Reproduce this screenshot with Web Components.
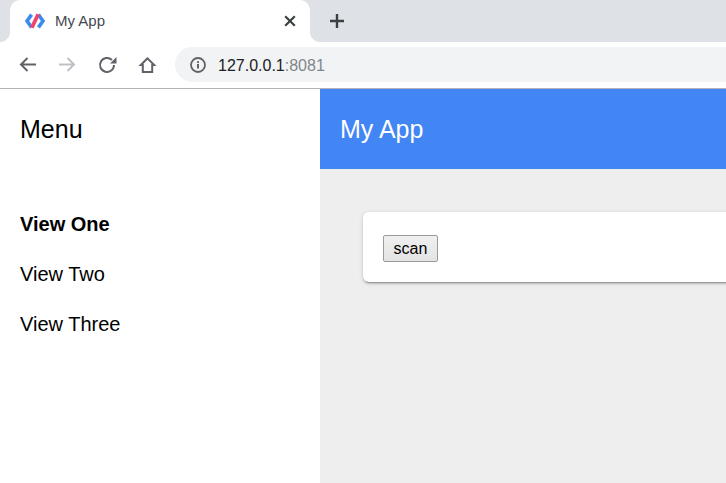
<!DOCTYPE html>
<html>
<head>
<meta charset="utf-8">
<title>My App</title>
<style>
  html, body { margin: 0; height: 100%; overflow: hidden; background: #fff; }
  body { font-family: "Liberation Sans", Arial, sans-serif; }
</style>
</head>
<body>
<browser-frame>
  <app-shell>
    <side-menu slot="menu" heading="Menu">
      <a class="selected">View One</a>
      <a>View Two</a>
      <a>View Three</a>
    </side-menu>
    <app-header slot="header">My App</app-header>
    <app-card><scan-button>scan</scan-button></app-card>
  </app-shell>
</browser-frame>

<script>
class BrowserFrame extends HTMLElement {
  constructor() {
    super();
    const shadow = this.attachShadow({ mode: 'open' });
    shadow.innerHTML = `
    <style>
      :host {
        display: flex;
        flex-direction: column;
        width: 726px;
        height: 483px;
        overflow: hidden;
        font-family: "Liberation Sans", Arial, sans-serif;
      }

      .strip {
        display: flex;
        flex: none;
        height: 42px;
        background: #dee1e6;
      }

      .gap {
        flex: none;
        width: 10px;
        background: #dee1e6;
      }

      .tab {
        position: relative;
        display: flex;
        flex: none;
        align-items: center;
        box-sizing: border-box;
        width: 300px;
        height: 42px;
        padding: 0 12px 0 15px;
        background: #fff;
        border-radius: 10px 10px 0 0;
      }

      .tab::before,
      .tab::after {
        content: '';
        position: absolute;
        bottom: 0;
        width: 10px;
        height: 10px;
        background: radial-gradient(circle at var(--cx) 0, #dee1e6 9.5px, #fff 10.5px);
      }

      .tab::before {
        --cx: 0;
        left: -10px;
      }

      .tab::after {
        --cx: 100%;
        right: -10px;
      }

      .title {
        flex: 1;
        margin: -2px 0 0 10px;
        color: #45494f;
        font-size: 15px;
      }

      .close {
        display: block;
        width: 16px;
        height: 16px;
      }

      .plus {
        display: block;
        margin: 13px 0 0 19px;
      }

      .toolbar {
        display: flex;
        flex: none;
        align-items: center;
        box-sizing: border-box;
        height: 47px;
        padding: 5px 0 6px 15px;
        background: #fff;
        border-bottom: 1px solid #b3b3b3;
      }

      .toolbar .nav {
        display: block;
        flex: none;
        width: 24px;
        height: 24px;
        margin: -1px 16px 0 0;
      }

      .omnibox {
        display: flex;
        flex: none;
        align-items: center;
        box-sizing: border-box;
        width: 620px;
        height: 35px;
        padding-left: 15px;
        background: #f1f3f4;
        border-radius: 18px;
      }

      .info {
        display: block;
        flex: none;
        margin-right: 12px;
      }

      .url {
        position: relative;
        top: 1px;
        color: #202124;
        font-size: 16px;
      }

      .port {
        color: #80868b;
      }

      .page {
        flex: 1;
        min-height: 0;
      }
    </style>

    <div class="strip">
      <div class="gap"></div>
      <div class="tab">
        <svg width="20" height="16" viewBox="0 0 20 16">
          <path d="M6.6 1.6 2 8l4.6 6.4" fill="none" stroke="#3b8af0" stroke-width="3.6"/>
          <path d="M13.4 1.6 18 8l-4.6 6.4" fill="none" stroke="#3b8af0" stroke-width="3.6"/>
          <path d="M13.2 1.2 6.8 14.8" fill="none" stroke="#f0426b" stroke-width="3.8"/>
        </svg>
        <span class="title">My App</span>
        <svg class="close" viewBox="0 0 16 16">
          <path d="M3.2 3.2l9.6 9.6M12.8 3.2l-9.6 9.6" stroke="#3c4043" stroke-width="2.2" fill="none"/>
        </svg>
      </div>
      <svg class="plus" width="16" height="16" viewBox="0 0 16 16">
        <path d="M8 1v14M1 8h14" stroke="#3c4043" stroke-width="2.4" fill="none"/>
      </svg>
    </div>

    <div class="toolbar">
      <svg class="nav" viewBox="0 0 24 24">
        <path d="M21 12.5H6M12.5 6l-6.5 6.5 6.5 6.5" stroke="#5f6368" stroke-width="2" fill="none"/>
      </svg>
      <svg class="nav" viewBox="0 0 24 24">
        <path d="M4 12.5h15M12.5 6l6.5 6.5-6.5 6.5" stroke="#bdc1c6" stroke-width="2" fill="none"/>
      </svg>
      <svg class="nav" viewBox="0 0 24 24">
        <path d="M16.9 8A7 7 0 1 0 19 13" stroke="#5f6368" stroke-width="2" fill="none"/>
        <path d="M21.5 5v6.5H15z" fill="#5f6368"/>
      </svg>
      <svg class="nav" viewBox="0 0 24 24">
        <path d="M12.5 6.3 5.8 13h2v7h9.4v-7h2z" stroke="#5f6368" stroke-width="2" fill="none"/>
      </svg>
      <div class="omnibox">
        <svg class="info" width="16" height="16" viewBox="0 0 16 16">
          <circle cx="8" cy="8" r="7" fill="none" stroke="#5f6368" stroke-width="1.8"/>
          <path d="M7 7h2v4.6H7zM7 4.2h2v1.8H7z" fill="#5f6368"/>
        </svg>
        <span class="url">127.0.0.1<span class="port">:8081</span></span>
      </div>
    </div>

    <div class="page"><slot></slot></div>
  `;
  }
}

class AppShell extends HTMLElement {
  constructor() {
    super();
    const shadow = this.attachShadow({ mode: 'open' });
    shadow.innerHTML = `
    <style>
      :host {
        display: flex;
        height: 100%;
      }

      .menu {
        flex: none;
        width: 320px;
        background: #fff;
      }

      .main {
        flex: none;
        width: 700px;
        background: #eee;
      }

      .content {
        padding: 43px;
      }
    </style>

    <div class="menu"><slot name="menu"></slot></div>
    <div class="main">
      <slot name="header"></slot>
      <div class="content"><slot></slot></div>
    </div>
  `;
  }
}

class SideMenu extends HTMLElement {
  constructor() {
    super();
    const shadow = this.attachShadow({ mode: 'open' });
    shadow.innerHTML = `
    <style>
      :host {
        display: block;
        color: #000;
      }

      .heading {
        box-sizing: border-box;
        height: 80px;
        padding-left: 20px;
        font-size: 25px;
        line-height: 80px;
      }

      nav {
        display: flex;
        flex-direction: column;
        padding-top: 30px;
      }

      ::slotted(a) {
        display: block;
        padding: 0 20px;
        font-size: 20px;
        line-height: 50px;
      }

      ::slotted(a.selected) {
        font-weight: bold;
      }
    </style>

    <div class="heading"></div>
    <nav><slot></slot></nav>
  `;
    shadow.querySelector('.heading').textContent = this.getAttribute('heading');
  }
}

class AppHeader extends HTMLElement {
  constructor() {
    super();
    const shadow = this.attachShadow({ mode: 'open' });
    shadow.innerHTML = `
    <style>
      :host {
        display: block;
        box-sizing: border-box;
        height: 80px;
        padding-left: 20px;
        background: #4285f4;
        color: #fff;
        font-size: 25px;
        line-height: 80px;
      }
    </style>

    <slot></slot>
  `;
  }
}

class AppCard extends HTMLElement {
  constructor() {
    super();
    const shadow = this.attachShadow({ mode: 'open' });
    shadow.innerHTML = `
    <style>
      :host {
        display: block;
        box-sizing: border-box;
        height: 70px;
        padding: 23px 20px 0;
        background: #fff;
        border-radius: 6px;
        box-shadow: 0 2px 2px rgba(0, 0, 0, 0.14), 0 1px 5px rgba(0, 0, 0, 0.12), 0 3px 1px -2px rgba(0, 0, 0, 0.2);
      }
    </style>

    <slot></slot>
  `;
  }
}

class ScanButton extends HTMLElement {
  constructor() {
    super();
    const shadow = this.attachShadow({ mode: 'open' });
    shadow.innerHTML = `
    <style>
      :host {
        display: inline-block;
      }

      button {
        display: block;
        box-sizing: border-box;
        width: 55px;
        height: 27px;
        padding: 0;
        background: linear-gradient(#f0f0f0, #e3e3e3);
        border: 1px solid #9a9a9a;
        border-radius: 2px;
        color: #000;
        font: 16px "Liberation Sans", Arial, sans-serif;
      }
    </style>

    <button><slot></slot></button>
  `;
  }
}

customElements.define('browser-frame', BrowserFrame);
customElements.define('app-shell', AppShell);
customElements.define('side-menu', SideMenu);
customElements.define('app-header', AppHeader);
customElements.define('app-card', AppCard);
customElements.define('scan-button', ScanButton);
</script>
</body>
</html>
